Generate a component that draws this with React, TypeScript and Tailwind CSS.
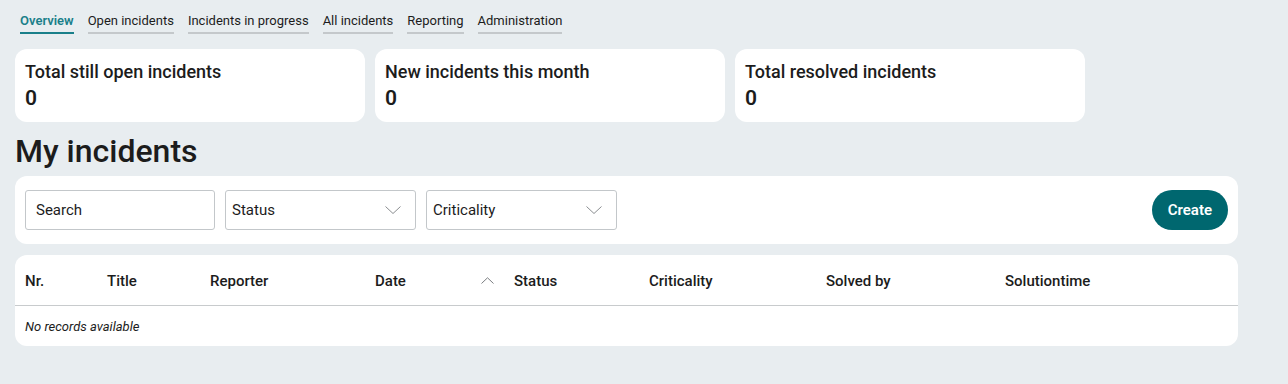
const tabs = ["Overview", "Open incidents", "Incidents in progress", "All incidents", "Reporting", "Administration"];

const columns = [
  { label: "Nr.", w: "w-[82px]" },
  { label: "Title", w: "w-[103px]" },
  { label: "Reporter", w: "w-[165px]" },
  { label: "Date", w: "w-[139px]", sort: true },
  { label: "Status", w: "w-[135px]" },
  { label: "Criticality", w: "w-[177px]" },
  { label: "Solved by", w: "w-[179px]" },
  { label: "Solutiontime", w: "flex-1" },
];

function StatCard({ label, value }: { label: string; value: string }): JSX.Element {
  return (
    <div className="h-[73px] w-[350px] rounded-xl bg-white px-[10px] pt-[11px]">
      <div className="text-[18px] font-medium leading-[24px] text-[#1c1c1c]">{label}</div>
      <div className="text-[21px] font-semibold leading-[28px] text-[#1c1c1c]">{value}</div>
    </div>
  );
}

function SelectBox({ label }: { label: string }): JSX.Element {
  return (
    <div className="flex h-[40px] w-[191px] items-center justify-between rounded-[3px] border border-[#c3c7ca] bg-white pl-[6px] pr-[14px] text-[15px] text-[#1c1c1c]">
      <span>{label}</span>
      <svg width="16" height="8" viewBox="0 0 16 8" fill="none" stroke="#8a8d90" strokeWidth="1">
        <polyline points="0.5,0.5 8,7.5 15.5,0.5" />
      </svg>
    </div>
  );
}

export default function App(): JSX.Element {
  return (
    <div className="min-h-[384px] bg-[#e8edf0] px-[15px] pt-[12px] font-['Roboto',sans-serif] text-[#1c1c1c]">
      <nav className="flex gap-[14px] pl-[5px]">
        {tabs.map((t, i) => (
          <div
            key={t}
            className={
              i === 0
                ? "border-b-2 border-[#1a7f8a] pb-[3px] text-[13px] font-semibold leading-[17px] text-[#1a7f8a]"
                : "border-b-2 border-[#c4c8cb] pb-[3px] text-[13px] leading-[17px] text-[#1c1c1c]"
            }
          >
            {t}
          </div>
        ))}
      </nav>

      <div className="mt-[15px] flex gap-[10px]">
        <StatCard label="Total still open incidents" value="0" />
        <StatCard label="New incidents this month" value="0" />
        <StatCard label="Total resolved incidents" value="0" />
      </div>

      <h1 className="mt-[9px] text-[32px] font-medium leading-[40px] text-[#1c1c1c]">My incidents</h1>

      <div className="mt-[5px] flex h-[68px] w-[1223px] items-center gap-[10px] rounded-xl bg-white px-[10px]">
        <div className="flex h-[40px] w-[190px] items-center rounded-[3px] border border-[#c3c7ca] px-[10px] text-[15px]">
          Search
        </div>
        <SelectBox label="Status" />
        <SelectBox label="Criticality" />
        <button className="ml-auto h-[40px] rounded-full bg-[#00676f] px-[16px] text-[15px] font-semibold text-white">
          Create
        </button>
      </div>

      <div className="mt-[11px] w-[1223px] rounded-xl bg-white">
        <div className="flex h-[51px] items-center border-b border-[#c8cbcd] pt-[2px]">
          {columns.map((c) => (
            <div key={c.label} className={`${c.w} flex items-center justify-between pl-[10px] text-[15px] font-medium`}>
              <span>{c.label}</span>
              {c.sort ? (
                <svg className="mr-[10px] mb-[1px]" width="13" height="7" viewBox="0 0 13 7" fill="none" stroke="#7a7d80" strokeWidth="1">
                  <polyline points="0.5,6.5 6.5,0.8 12.5,6.5" />
                </svg>
              ) : null}
            </div>
          ))}
        </div>
        <div className="flex h-[40px] items-center px-[10px] pt-[2px] text-[13px] italic">No records available</div>
      </div>
    </div>
  );
}
